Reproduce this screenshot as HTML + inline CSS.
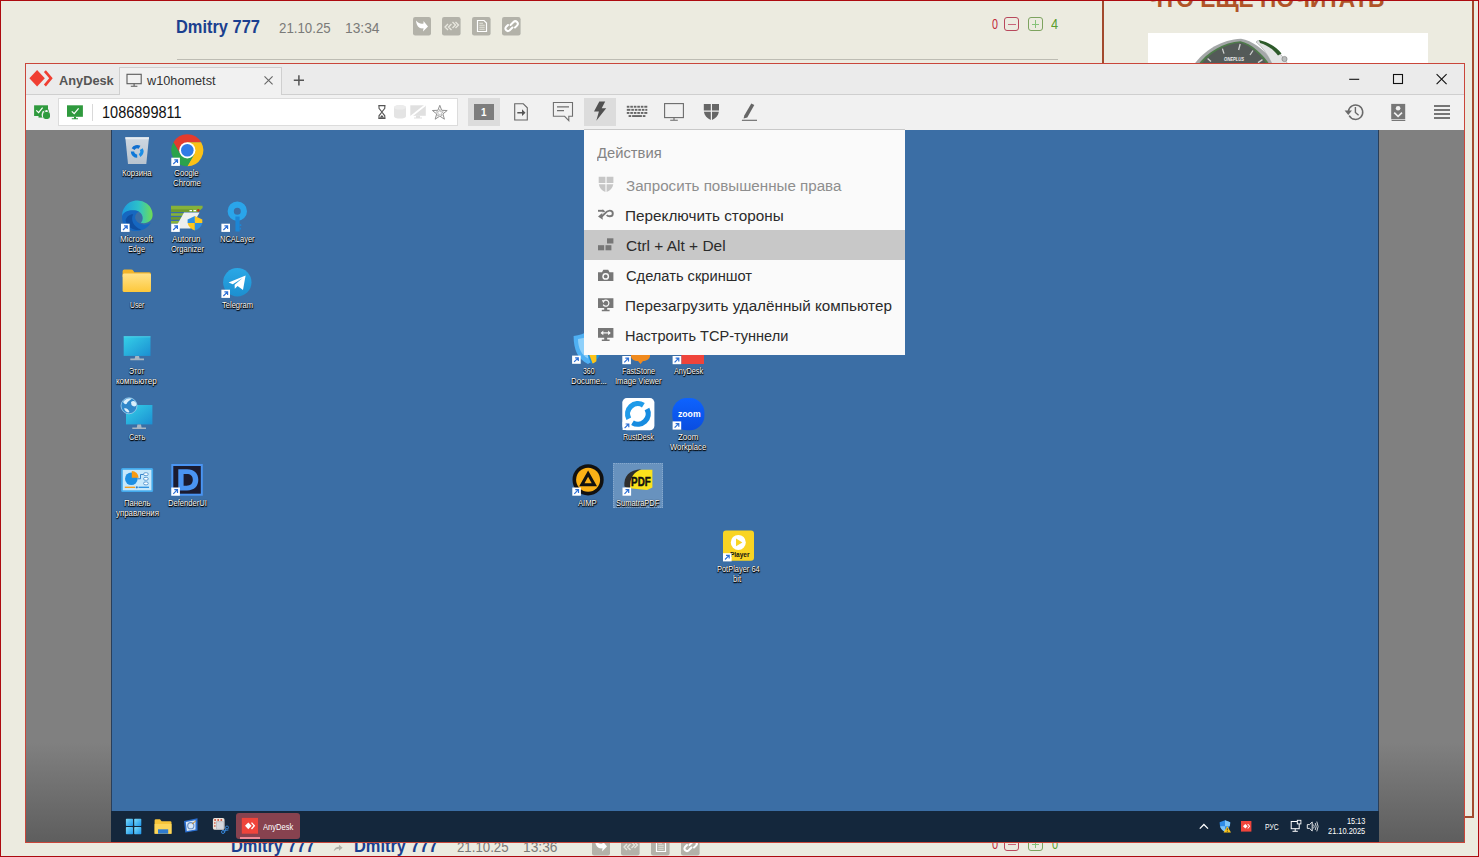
<!DOCTYPE html>
<html lang="ru"><head><meta charset="utf-8"><title>AnyDesk</title>
<style>
html,body{margin:0;padding:0}
body{width:1479px;height:857px;overflow:hidden;background:#ecebe0;font-family:"Liberation Sans",sans-serif;position:relative}
.abs,.tx,.layer{position:absolute}
.layer{left:0;top:0;width:1479px;height:857px;overflow:hidden}
.tx{white-space:nowrap;line-height:1;display:block;transform-origin:0 0}
.dl{text-shadow:0 0 1.5px #000,0.7px 0.7px 1.2px #000,0 0.6px 1px rgba(0,0,0,.9)}
svg{position:absolute;overflow:visible}
</style></head><body>
<!-- ===== forum page behind ===== -->
<div class="layer" id="page">
  <div class="abs" style="left:177px;top:59px;width:881px;height:1px;background:#bdbcb3"></div>
  <div class="abs" style="left:1102px;top:0;width:2px;height:70px;background:#a24a2e"></div>
  <div class="abs" style="left:1472px;top:0;width:2px;height:817.7px;background:#a24a2e"></div>
  <div class="abs" style="left:1102px;top:815.6px;width:372px;height:2.1px;background:#a24a2e"></div>
  <div class="abs" style="left:1148px;top:33px;width:280px;height:40px;background:#fff"></div>
<!-- forum action icons -->
<svg style="left:413px;top:17px" width="110" height="19" viewBox="0 0 110 19">
  <g id="fi">
  <g fill="#b3b2a9"><rect x="0" y="0" width="18" height="18.5" rx="2.2"/><rect x="29" y="0" width="18.6" height="18.5" rx="2.2"/><rect x="59" y="0" width="18.6" height="18.5" rx="2.2"/><rect x="89" y="0" width="18.6" height="18.5" rx="2.2"/></g>
  <path d="M3 3.5 C5.5 6.5 8 7.2 10.5 6.6 L10.5 4 L15 9.5 L10 14.5 L10.5 11.3 C6.5 12 3.5 9.5 3 3.5Z" fill="#fff"/>
  <path d="M35 7 L32 10 L35 13 M38.5 7 L35.5 10 L38.5 13 M39.5 5 L42.5 8 L39.5 11 M42.5 5 L45.5 8 L42.5 11" fill="none" stroke="#e9e8df" stroke-width="1.3"/>
  <path d="M64.5 3.5 H71 L73.5 6 V14.5 H64.5Z" fill="none" stroke="#fff" stroke-width="1.2"/>
  <path d="M66.3 6.3H70 M66.3 8.3H71.7 M66.3 10.3H71.7 M66.3 12.3H71.7" stroke="#e4e3da" stroke-width="1.1"/>
  <g fill="none" stroke="#fff" stroke-width="2" stroke-linecap="round"><path d="M97.5 8 L100.5 5 A2.5 2.5 0 0 1 104 8.6 L102 10.5"/><path d="M99.5 10.5 L96.5 13.5 A2.5 2.5 0 0 1 93 10 L95 8"/></g>
  </g>
</svg>
<svg style="left:592px;top:837.3px" width="110" height="19" viewBox="0 0 110 19"><use href="#fi"/></svg>
<!-- vote buttons -->
<div class="abs" style="left:1004px;top:17px;width:15px;height:14px;border:1px solid #b8485c;border-radius:3px;box-sizing:border-box"></div>
<div class="abs" style="left:1008px;top:23.5px;width:7.5px;height:1px;background:#c9657a"></div>
<div class="abs" style="left:1028px;top:17px;width:14.5px;height:14px;border:1px solid #7da35f;border-radius:3px;box-sizing:border-box"></div>
<div class="abs" style="left:1031.5px;top:23.5px;width:7.5px;height:1px;background:#86c27a"></div>
<div class="abs" style="left:1034.8px;top:20.2px;width:1px;height:7.5px;background:#86c27a"></div>
<div class="abs" style="left:1004px;top:837.3px;width:15px;height:14px;border:1px solid #b8485c;border-radius:3px;box-sizing:border-box"></div>
<div class="abs" style="left:1008px;top:843.9px;width:7.5px;height:1px;background:#c9657a"></div>
<div class="abs" style="left:1028px;top:837.3px;width:14.5px;height:14px;border:1px solid #7da35f;border-radius:3px;box-sizing:border-box"></div>
<div class="abs" style="left:1031.5px;top:843.9px;width:7.5px;height:1px;background:#86c27a"></div>
<div class="abs" style="left:1034.8px;top:840.6px;width:1px;height:7.5px;background:#86c27a"></div>
<!-- reply arrow in bottom row -->
<svg style="left:332.6px;top:843.6px" width="10.6" height="8" viewBox="0 0 16 12"><path d="M1 11 C2 6 5 4 9 4 V1 L14.5 5.5 L9 10 V7 C6 7 3.5 8 1 11Z" fill="#b3b2a9"/></svg>
<!-- watch in promo image -->
<svg style="left:0;top:0;overflow:hidden" width="1479" height="70" viewBox="0 0 1479 70">
  <path d="M1193 66 C1204 50 1222 39.5 1241 38.8 C1254 41 1267 52 1276 66Z" fill="#a4a7a8"/>
  <path d="M1197 66 C1207 52 1224 42.2 1240.5 41.3 C1251 43.5 1263 54 1270.5 66Z" fill="#4e7a4a"/>
  <path d="M1199.5 66 C1209 53.5 1225 43.6 1240.5 42.8 C1250 45 1261 55 1268 66Z" fill="#545a58"/>
  <path d="M1258 40.5 C1270 43.5 1281 52 1289 66 L1273 66 C1268.5 56 1263 47.5 1256 42Z" fill="#e2e4e4" stroke="#9a9d9e" stroke-width=".6"/>
  <path d="M1259 40 C1268 42 1276.5 47 1281.5 53.5 L1278 55.5 C1273 49 1266.5 45 1260 43Z" fill="#2d5a2a"/>
  <circle cx="1284.5" cy="59" r="2.6" fill="#b9bcbc" stroke="#777" stroke-width=".6"/>
  <path d="M1240.2 44 L1238.6 50 M1222.4 48.6 L1224 53.6 M1253 50.5 L1250 55 M1207.6 58.6 L1211 61.6 M1262.5 59.6 L1258 62.6" stroke="#cfd2d0" stroke-width="1.3"/>
  <text x="1224" y="60.6" font-size="4.6" font-family="Liberation Sans, sans-serif" font-weight="bold" font-style="italic" fill="#eee" textLength="20" lengthAdjust="spacingAndGlyphs">ONEPLUS</text>
</svg>

<span id="t0" class="tx" style="left:176.09px;top:18.00px;font-size:18px;color:#1b3f8f;font-weight:bold;transform:scaleX(0.9117);">Dmitry 777</span>
<span id="t1" class="tx" style="left:278.50px;top:20.00px;font-size:15.5px;color:#7a7a78;font-weight:normal;transform:scaleX(0.8557);">21.10.25</span>
<span id="t2" class="tx" style="left:345.11px;top:20.00px;font-size:15.5px;color:#7a7a78;font-weight:normal;transform:scaleX(0.8908);">13:34</span>
<span id="t3" class="tx" style="left:992.00px;top:17.00px;font-size:14px;color:#c0283a;font-weight:normal;transform:scaleX(0.7625);">0</span>
<span id="t4" class="tx" style="left:1050.90px;top:17.00px;font-size:14px;color:#5a9e2e;font-weight:normal;transform:scaleX(0.9125);">4</span>
<span id="t5" class="tx" style="left:1146.53px;top:-12.00px;font-size:23.5px;color:#b05428;font-weight:bold;transform:scaleX(0.9670);">ЧТО ЕЩЁ ПОЧИТАТЬ</span>
<span id="t6" class="tx" style="left:231.09px;top:837.00px;font-size:18px;color:#1b3f8f;font-weight:bold;transform:scaleX(0.9117);">Dmitry 777</span>
<span id="t7" class="tx" style="left:354.09px;top:837.00px;font-size:18px;color:#1b3f8f;font-weight:bold;transform:scaleX(0.9117);">Dmitry 777</span>
<span id="t8" class="tx" style="left:457.00px;top:839.00px;font-size:15.5px;color:#7a7a78;font-weight:normal;transform:scaleX(0.8541);">21.10.25</span>
<span id="t9" class="tx" style="left:523.11px;top:839.00px;font-size:15.5px;color:#7a7a78;font-weight:normal;transform:scaleX(0.8879);">13:36</span>
<span id="t10" class="tx" style="left:992.00px;top:837.00px;font-size:14px;color:#c0283a;font-weight:normal;transform:scaleX(0.7875);">0</span>
<span id="t11" class="tx" style="left:1051.70px;top:837.00px;font-size:14px;color:#5a9e2e;font-weight:normal;transform:scaleX(0.7875);">0</span>
</div>
<!-- ===== AnyDesk window ===== -->
<div class="layer" id="win">
  <div class="abs" style="left:25px;top:63px;width:1438px;height:778px;border:1px solid #c9463a;background:#f1f1f1"></div>
  <!-- title bar -->
  <div class="abs" style="left:26px;top:64px;width:1438px;height:30px;background:#ebebeb"></div>
  <div class="abs" style="left:26px;top:94px;width:1438px;height:1px;background:#cfcfcf"></div>
  <!-- tab -->
  <div class="abs" style="left:119px;top:67px;width:163px;height:28px;background:#f1f1f1;border:1px solid #cfcfcf;border-bottom:none;box-sizing:border-box"></div>
  <!-- toolbar -->
  <div class="abs" style="left:58px;top:98px;width:400px;height:28px;background:#fff;border:1px solid #dcdcdc;box-sizing:border-box"></div>
  <div class="abs" style="left:92px;top:104px;width:1px;height:17px;background:#d9d9d9"></div>
  <div class="abs" style="left:468px;top:98px;width:32px;height:28px;background:#dcdcdc"></div>
  <div class="abs" style="left:474px;top:104px;width:20px;height:16px;background:#7d7d7d"></div>
  <div class="abs" style="left:584px;top:98px;width:32px;height:28px;background:#dcdcdc"></div>
  <!-- remote view -->
  <div class="abs" style="left:26px;top:130px;width:1438px;height:712px;background:linear-gradient(to bottom,#808080 0,#808080 86%,#5e5e5e 100%)"></div>
  <div class="abs" style="left:111px;top:130px;width:1267.5px;height:681px;background:#3b6ea5;border-left:1px solid #2a3f5a;border-right:1px solid #2a3f5a;box-sizing:border-box"></div>
  <div class="abs" style="left:111px;top:810.5px;width:1267.5px;height:31.5px;background:#14273c"></div>
  <!-- selection -->
  <div class="abs" style="left:613px;top:463px;width:50px;height:45px;background:#6892be;border:1px dotted #86a8cd;box-sizing:border-box"></div>
  <!-- taskbar anydesk button -->
  <div class="abs" style="left:236px;top:813px;width:64px;height:26px;background:#87424f;border-radius:3px"></div>
  <div class="abs" style="left:240px;top:837px;width:20px;height:2px;background:#f08a96"></div>
<!-- ===== window chrome icons ===== -->
<svg style="left:0;top:0" width="1479" height="135" viewBox="0 0 1479 135">
  <!-- AnyDesk logo -->
  <path d="M29.4 78.3 L37.1 70 L44.8 78.3 L37.1 86.6Z" fill="#f03e32"/>
  <path d="M45.9 70.2 L52.7 78.3 L45.9 86.4 L43.9 84.6 L49.2 78.3 L43.9 72Z" fill="#f03e32"/>
  <!-- tab monitor icon -->
  <rect x="127" y="74.3" width="14.2" height="9.4" fill="none" stroke="#5a5a5a" stroke-width="1.1"/>
  <path d="M134.1 83.7 V86 M130.8 86.2 H137.4" stroke="#5a5a5a" stroke-width="1.1" fill="none"/>
  <!-- tab close, plus -->
  <path d="M264.5 76.3 L272.6 84.4 M272.6 76.3 L264.5 84.4" stroke="#666" stroke-width="1.1"/>
  <path d="M293.8 80.3 H304 M298.9 75.2 V85.4" stroke="#555" stroke-width="1.5"/>
  <!-- window controls -->
  <path d="M1349.2 79.3 H1359.2" stroke="#111" stroke-width="1.1"/>
  <rect x="1393.5" y="74.5" width="9" height="9" fill="none" stroke="#111" stroke-width="1.1"/>
  <path d="M1436.6 74.2 L1446.6 84.2 M1446.6 74.2 L1436.6 84.2" stroke="#111" stroke-width="1.1"/>
  <!-- left status icon: green monitor + lock -->
  <rect x="34.1" y="105.3" width="13.9" height="10.7" fill="#2f9a3e"/>
  <path d="M38.5 116 H43 V117.6 H38.5Z" fill="#2f9a3e"/>
  <path d="M36.3 110.3 L38.6 112.6 L42.6 107.6" stroke="#fff" stroke-width="1.2" fill="none"/>
  <circle cx="46.5" cy="114.8" r="4.9" fill="#f1f1f1"/>
  <rect x="43" y="112" width="7" height="7" rx="2.4" fill="#2f9a3e"/>
  <path d="M44.7 112.3 V111 A1.8 1.8 0 0 1 48.3 111 V112.3" stroke="#2f9a3e" stroke-width="1.1" fill="none"/>
  <!-- address box green monitor -->
  <rect x="67" y="105.3" width="15.9" height="11.5" fill="#2f9a3e"/>
  <path d="M74 116.8 H76 V118.3 H78 V119.2 H71.8 V118.3 H74Z" fill="#2f9a3e"/>
  <path d="M71.8 111.3 L74.2 113.7 L78.6 108.4" stroke="#fff" stroke-width="1.2" fill="none"/>
  <!-- hourglass -->
  <path d="M378.3 105.7 H385.5 M378.3 118.4 H385.5" stroke="#555" stroke-width="1.3"/>
  <path d="M379 106 V108.3 L381.9 112 L379 115.8 V118 M384.8 106 V108.3 L381.9 112 L384.8 115.8 V118" stroke="#555" stroke-width="1.1" fill="none"/>
  <path d="M379.6 117.8 L381.9 115 L384.2 117.8Z" fill="#555"/>
  <!-- cylinder (disabled) -->
  <path d="M394 107.3 A6 2.3 0 0 1 406 107.3 V116.3 A6 2.3 0 0 1 394 116.3Z" fill="#e4e4e4"/>
  <ellipse cx="400" cy="107.3" rx="6" ry="2.3" fill="#ececec"/>
  <!-- monitor slashed (disabled) -->
  <rect x="410.3" y="105.3" width="15.5" height="10.5" fill="#e0e0e0"/>
  <path d="M416 115.8 H420 V117.6 H422 V118.5 H414 V117.6 H416Z" fill="#e0e0e0"/>
  <path d="M411 116.5 L425.5 105" stroke="#fff" stroke-width="1.6"/>
  <!-- star -->
  <path d="M439.8 105.3 L441.7 110.3 L447.2 110.5 L442.9 113.9 L444.4 119.2 L439.8 116.1 L435.2 119.2 L436.7 113.9 L432.4 110.5 L437.9 110.3Z" fill="none" stroke="#909090" stroke-width="1"/>
  <path d="M439.8 109.3 L440.7 111.8 L443.3 111.9 L441.3 113.5 L442 116 L439.8 114.5 L437.6 116 L438.3 113.5 L436.3 111.9 L438.9 111.8Z" fill="none" stroke="#aaa" stroke-width=".8"/>
  <!-- file transfer icon -->
  <path d="M514.7 103.8 H523.3 L527.3 107.8 V120 H514.7Z" fill="none" stroke="#666" stroke-width="1.1"/>
  <path d="M517.3 112 H522 V109.3 L525.5 112.7 L522 116.1 V113.4 H517.3Z" fill="#555"/>
  <!-- chat icon -->
  <path d="M553.4 102.5 H572.5 V116.3 H568.8 V120.6 L564.6 116.3 H553.4Z" fill="none" stroke="#6f6f6f" stroke-width="1.1"/>
  <path d="M557 106.8 H569 M557 110.6 H564" stroke="#6f6f6f" stroke-width="1.3"/>
  <!-- bolt -->
  <path d="M599.3 101.6 H605.2 L601.7 108.3 H606.2 L596.3 120.7 L598.9 111.4 H594 Z" fill="#505050"/>
  <!-- keyboard -->
  <g fill="#666">
    <rect x="626.8" y="105.8" width="2.6" height="1.9"/><rect x="630.3" y="105.8" width="2.6" height="1.9"/><rect x="633.8" y="105.8" width="2.6" height="1.9"/><rect x="637.3" y="105.8" width="2.6" height="1.9"/><rect x="640.8" y="105.8" width="2.6" height="1.9"/><rect x="644.3" y="105.8" width="3" height="1.9"/>
    <rect x="626.8" y="108.9" width="3.6" height="1.9"/><rect x="631.3" y="108.9" width="2.6" height="1.9"/><rect x="634.8" y="108.9" width="2.6" height="1.9"/><rect x="638.3" y="108.9" width="2.6" height="1.9"/><rect x="641.8" y="108.9" width="2.6" height="1.9"/><rect x="645.3" y="108.9" width="2" height="1.9"/>
    <rect x="626.8" y="112" width="2.6" height="1.9"/><rect x="630.3" y="112" width="2.6" height="1.9"/><rect x="633.8" y="112" width="2.6" height="1.9"/><rect x="637.3" y="112" width="2.6" height="1.9"/><rect x="640.8" y="112" width="2.6" height="1.9"/><rect x="644.3" y="112" width="3" height="1.9"/>
    <rect x="628.6" y="115.1" width="2.6" height="1.9"/><rect x="632.1" y="115.1" width="9.8" height="1.9"/><rect x="642.8" y="115.1" width="2.6" height="1.9"/>
  </g>
  <!-- monitor -->
  <rect x="664.6" y="103.6" width="18.8" height="14" fill="none" stroke="#6a6a6a" stroke-width="1.1"/>
  <path d="M674 117.6 V120.2 M670.2 120.3 H677.8" stroke="#6a6a6a" stroke-width="1.1"/>
  <!-- shield -->
  <path d="M703.8 104 H710.8 V110.6 H703.8Z M712 104 H719 V110.6 H712Z M703.9 111.8 H710.8 V119.9 C707 118.3 704.5 115.6 703.9 111.8Z M712 111.8 H718.9 C718.3 115.6 715.8 118.3 712 119.9Z" fill="#666"/>
  <!-- pen -->
  <path d="M751.3 103.6 L754.3 104.9 L747.3 117.4 L743.6 118.6 L744.3 115.4Z" fill="#666"/>
  <path d="M741.9 120.3 H757" stroke="#666" stroke-width="1.1"/>
  <!-- history -->
  <path d="M1349.2 115.6 A7.2 7.2 0 1 0 1348.4 111.2" fill="none" stroke="#6a6a6a" stroke-width="1.5"/>
  <path d="M1344.6 110.6 H1352 L1348.3 114.9Z" fill="#6a6a6a"/>
  <path d="M1355.4 107 V112.5 L1358.6 115.3" fill="none" stroke="#6a6a6a" stroke-width="1.4"/>
  <!-- address book -->
  <rect x="1391.2" y="103.9" width="14" height="15.4" fill="#777"/>
  <path d="M1391.6 120.5 H1405.3" stroke="#777" stroke-width="1"/>
  <circle cx="1398.1" cy="108.3" r="2.3" fill="#f1f1f1"/>
  <path d="M1394.2 112.6 L1398.1 116.3 L1402 112.6" stroke="#f1f1f1" stroke-width="1.6" fill="none"/>
  <!-- hamburger -->
  <path d="M1434 106 H1450 M1434 110 H1450 M1434 114 H1450 M1434 118 H1450" stroke="#757575" stroke-width="1.9"/>
</svg>
<!-- ===== remote desktop icons ===== -->
<svg style="left:0;top:0" width="1479" height="857" viewBox="0 0 1479 857">
<defs>
  <g id="sc"><rect x="0" y="0" width="8.6" height="8.2" fill="#fff"/><path d="M2 6.3 L5.6 2.7 M3 2.2 H6.2 V5.4" stroke="#2b6fd6" stroke-width="1.2" fill="none"/></g>
  <linearGradient id="gbin" x1="0" y1="0" x2="0" y2="1"><stop offset="0" stop-color="#d3dbe3"/><stop offset="1" stop-color="#bcc6d0"/></linearGradient>
  <linearGradient id="gmon" x1="0" y1="0" x2="1" y2="1"><stop offset="0" stop-color="#35d0e8"/><stop offset="1" stop-color="#1b8fd2"/></linearGradient>
  <linearGradient id="gfold" x1="0" y1="0" x2="0" y2="1"><stop offset="0" stop-color="#ffe28a"/><stop offset="1" stop-color="#fdc83b"/></linearGradient>
  <linearGradient id="gedge" x1="0" y1="0" x2="1" y2="0"><stop offset="0" stop-color="#1c9ae0"/><stop offset=".55" stop-color="#2dc2c8"/><stop offset="1" stop-color="#6fdc54"/></linearGradient>
  <linearGradient id="gtg" x1="0" y1="0" x2="0" y2="1"><stop offset="0" stop-color="#2aa8e6"/><stop offset="1" stop-color="#1c8fd0"/></linearGradient>
  <linearGradient id="gzoom" x1="0" y1="0" x2="0" y2="1"><stop offset="0" stop-color="#0d63ff"/><stop offset="1" stop-color="#0a4de0"/></linearGradient>
  <linearGradient id="gwin" x1="0" y1="0" x2="1" y2="1"><stop offset="0" stop-color="#7bdcfb"/><stop offset="1" stop-color="#1e95ea"/></linearGradient>
</defs>
<!-- Recycle bin -->
<path d="M125.3 137.2 H149 L146.3 164 H128Z" fill="url(#gbin)" opacity=".97"/>
<path d="M125.3 137.2 H149 L148.8 139.2 H125.5Z" fill="#e6ecf1"/>
<g fill="none" stroke-width="3.4"><path d="M133.13 149.05 A4.7 4.7 0 0 1 139.55 147.33" stroke="#0f6fd0"/><path d="M141.27 149.05 A4.7 4.7 0 0 1 139.55 155.47" stroke="#1b8ee6"/><path d="M137.20 156.10 A4.7 4.7 0 0 1 132.50 151.40" stroke="#0f78d8"/></g>
<!-- Chrome -->
<path d="M173.44 142.30 A16 16 0 0 1 201.16 142.30 L187.30 142.30 L187.30 150.30 L180.37 154.30 Z" fill="#e33b2e"/>
<path d="M201.16 142.30 A16 16 0 0 1 187.30 166.30 L194.23 154.30 L187.30 150.30 L187.30 142.30 Z" fill="#fbc116"/>
<path d="M187.30 166.30 A16 16 0 0 1 173.44 142.30 L180.37 154.30 L187.30 150.30 L194.23 154.30 Z" fill="#2ba24c"/>
<circle cx="187.3" cy="150.3" r="8.1" fill="#fff"/>
<circle cx="187.3" cy="150.3" r="6.3" fill="#2f7be6"/>
<use href="#sc" x="171.3" y="157.7"/>
<!-- Edge -->
<g transform="translate(137.4 215.6) scale(.955) translate(-137.4 -214.9)">
<path d="M121.5 217 A16 16 0 0 1 153.3 213 C154 221 147 224 141 222.5 C146 217 141 209 134 209.5 C127 210 122.5 213 121.5 217Z" fill="url(#gedge)"/>
<path d="M121.3 216 C121 226 129 232 138 231 C144 230.5 149 227 151.5 222.5 C146 226 138 224.5 135.5 219 C134 215 136.5 211.5 139 210.5 C131 207.5 122 210 121.3 216Z" fill="#1667c0"/>
<path d="M133 213.5 C130 219 133 227 141.5 229.5 C136 231.5 127 228 125 220 C126 216 129 213.5 133 213.5Z" fill="#0f4fa2"/>
</g>
<use href="#sc" x="121" y="223.7"/>
<!-- Autorun Organizer -->
<path d="M171 205.8 H202.6 V208 L198 212 H171Z" fill="#86b23a"/>
<rect x="171" y="209.3" width="22" height="2.6" fill="#6d9a2f"/><rect x="171" y="213.2" width="18" height="2.6" fill="#86b23a"/><rect x="171" y="217.1" width="14" height="2.6" fill="#6d9a2f"/><rect x="171" y="221" width="10" height="2.6" fill="#86b23a"/>
<path d="M184 212.5 H199.5 L190.5 228.5 H175Z" fill="#eef0ee"/>
<path d="M189.5 210.6 H192 M193.5 210.6 H196" stroke="#fff" stroke-width="1.4"/><circle cx="198.3" cy="210.4" r="1.3" fill="#b63b1e"/>
<path d="M187.6 219.5 L194.9 215.9 V223 H187.6Z" fill="#2d8fe0"/><path d="M194.9 215.9 L202.3 219.5 V223 H194.9Z" fill="#fdc81d"/>
<path d="M187.6 223 H194.9 V230.5 C191 229 188.3 226.5 187.6 223Z" fill="#fdc81d"/><path d="M194.9 223 H202.3 C201.6 226.5 198.8 229 194.9 230.5Z" fill="#2d8fe0"/>
<use href="#sc" x="171.2" y="223.7"/>
<!-- NCALayer key -->
<circle cx="237.3" cy="211.2" r="6.6" fill="none" stroke="#2aa5ea" stroke-width="6.2"/>
<path d="M235.4 216.5 H239.6 V231.5 H235.4Z" fill="#1c86d6"/><path d="M239.6 224.3 H241.3 V226 H239.6Z M239.6 227.8 H241 V229.5 H239.6Z" fill="#1c86d6"/>
<use href="#sc" x="221.4" y="223.7"/>
<!-- User folder -->
<path d="M122.6 271.3 Q122.6 269.6 124.3 269.6 H131 Q132.6 269.6 133.5 271 L134.3 272.2 H149.3 Q151 272.2 151 273.9 V277 H122.6Z" fill="#f2b42a"/>
<rect x="122.6" y="273.4" width="28.4" height="18.6" rx="1.6" fill="url(#gfold)"/>
<!-- Telegram -->
<circle cx="237.3" cy="282.3" r="14.2" fill="url(#gtg)"/>
<path d="M228.6 282.6 L245.6 275.6 L243 290 L237.6 286 L234.8 288.8 L234.6 284.8 L242.6 278 L232.8 284.2Z" fill="#fff"/>
<use href="#sc" x="221.4" y="289.7"/>
<!-- This PC -->
<rect x="123.7" y="336.3" width="26.8" height="19.6" fill="url(#gmon)"/>
<rect x="123.7" y="336.3" width="26.8" height="1" fill="#5fe0f0" opacity=".6"/>
<path d="M135.3 355.9 H139 L139.6 358.6 H144 V360.2 H130.3 V358.6 H134.7Z" fill="#a9b6c2"/>
<!-- Network -->
<rect x="126" y="405" width="26.4" height="19.4" fill="url(#gmon)"/>
<path d="M137.4 424.4 H141 L141.6 427.4 H146 V429 H132.3 V427.4 H136.8Z" fill="#a9b6c2"/>
<circle cx="129" cy="405.8" r="8" fill="#2f86c9"/>
<path d="M123 402 C125 398.5 129 397.5 132 398.5 C130 400.5 127.5 401 126.5 404 C125 404.5 124 403.5 123 402Z M131 402 C133.5 400 136 401.5 136.8 404.5 C135.5 407.5 133 406.5 131.5 405Z M124 408.5 C126 407.5 128.5 409 129.5 412 C127.5 413.2 125 411.5 124 408.5Z" fill="#d9eefb"/>
<circle cx="129" cy="405.8" r="8" fill="none" stroke="#9fd0ee" stroke-width=".8"/>
<!-- Control panel -->
<rect x="121.1" y="468.1" width="32" height="23.9" rx="1.5" fill="#43a9ec"/>
<rect x="122.8" y="469.8" width="28.6" height="20.5" fill="#c7e8fb"/>
<circle cx="131.3" cy="478.8" r="6.3" fill="#1d8fe3"/>
<path d="M131.8 477.8 V471 A6.8 6.8 0 0 1 138.6 477.8Z" fill="#f89a12"/>
<path d="M137.5 478.8 H140.5 V474.5 H144" fill="none" stroke="#2b7bc4" stroke-width=".9"/>
<rect x="143.6" y="472.8" width="4.6" height="2.8" rx="1.4" fill="#fff" stroke="#2b7bc4" stroke-width=".7"/><rect x="143.6" y="477.4" width="4.6" height="2.8" rx="1.4" fill="#fff" stroke="#2b7bc4" stroke-width=".7"/><rect x="143.6" y="482" width="4.6" height="2.8" rx="1.4" fill="#fff" stroke="#2b7bc4" stroke-width=".7"/>
<path d="M124.8 487.3 H135" stroke="#f89a12" stroke-width="1.3"/><path d="M138.5 487.3 H149" stroke="#2b8fe0" stroke-width="1.3"/><circle cx="136.8" cy="487.3" r="1.1" fill="#2b7bc4"/>
<!-- DefenderUI -->
<rect x="171.3" y="464" width="31.5" height="31.7" fill="#4a94f2"/>
<rect x="173.3" y="466" width="27.5" height="27.7" fill="#1b1b30"/>
<path d="M178.3 469.3 H187 C194.5 469.3 198.3 473.5 198.3 479.8 C198.3 486.2 194.5 490.4 187 490.4 H178.3Z M183.6 474 V485.7 H186.6 C190.6 485.7 192.8 483.6 192.8 479.8 C192.8 476 190.6 474 186.6 474Z" fill="#4a94f2" fill-rule="evenodd"/>
<use href="#sc" x="171.3" y="487.5"/>
<!-- 360 / FastStone / AnyDesk (mostly hidden by menu) -->
<path d="M573.6 336 C580 335.3 584 333.5 588 331 C592 333.5 596 335.3 602.4 336 C602.4 350 598 359 588 364 C578 359 573.6 350 573.6 336Z" fill="#4fb0f3"/>
<path d="M578 339 C582 338.5 585 337.5 588 336 V358.5 C581.5 355 578 348 578 339Z" fill="#8ed0fa"/>
<path d="M588 355 H600 C598 359 594.5 362 591 364 Z" fill="#1a90e0"/>
<path d="M589.4 355 H596.4 V361.3 C595 362.3 593.6 363.2 592.6 363.6Z" fill="#fcc419"/>
<use href="#sc" x="572.1" y="355.6"/>
<path d="M631 340 H650 V356 C650 359 646 361 643 361 L640.5 364 L638 361 C634 361 631 359 631 356Z" fill="#f08a1d"/>
<use href="#sc" x="622.3" y="356"/>
<rect x="681.3" y="334" width="22.7" height="30" fill="#ef443b"/>
<use href="#sc" x="672.6" y="356"/>
<!-- RustDesk -->
<rect x="622.3" y="398.1" width="32.1" height="32.1" rx="4.5" fill="#fff"/>
<path d="M628.81 418.74 A10.3 10.3 0 0 1 643.36 405.17" fill="none" stroke="#1f9be9" stroke-width="5.3"/>
<path d="M646.99 409.06 A10.3 10.3 0 0 1 632.44 422.63" fill="none" stroke="#178ce0" stroke-width="5.3"/>
<use href="#sc" x="622.6" y="421.8"/>
<!-- Zoom -->
<rect x="672.3" y="398" width="32.1" height="32.2" rx="14.5" fill="url(#gzoom)"/>
<use href="#sc" x="672.6" y="421.4"/>
<!-- AIMP -->
<circle cx="588.1" cy="479.8" r="15.6" fill="#111"/>
<circle cx="588.1" cy="479.8" r="12" fill="#fbb117"/>
<path d="M588.1 470.5 L597 486.2 H579.2Z M588.1 476.7 L584.5 483.2 H591.7Z" fill="#111" fill-rule="evenodd"/>
<use href="#sc" x="572.3" y="487.5"/>
<!-- SumatraPDF -->
<path d="M627 487.4 C626.4 477 631 470.6 641 469.8 L652.4 469.7 V487.6 L647 490 L632 488.4Z" fill="#fbe21c"/>
<path d="M624.4 486.6 C623.6 476 629 469.8 641.5 469.2 C633.5 472 629.6 478 630.2 488.2 L626.6 487.4Z" fill="#2e2e2e"/>
<text x="631.1" y="485.6" font-family="Liberation Sans, sans-serif" font-weight="bold" font-size="13.4" fill="#111" stroke="#111" stroke-width=".5" textLength="19.6" lengthAdjust="spacingAndGlyphs">PDF</text>
<use href="#sc" x="622.5" y="487.5"/>
<!-- PotPlayer -->
<rect x="723" y="530.5" width="31" height="30.3" rx="3" fill="#f9d423"/>
<circle cx="738.3" cy="542.4" r="7.5" fill="#fff"/>
<path d="M736 538.6 L742.4 542.4 L736 546.2Z" fill="#f9d423"/>
<text x="729.9" y="557" font-family="Liberation Sans, sans-serif" font-weight="bold" font-size="7" fill="#111" textLength="19.6" lengthAdjust="spacingAndGlyphs">Player</text>
<use href="#sc" x="723" y="553.2"/>
<!-- ===== taskbar ===== -->
<g fill="url(#gwin)"><rect x="125.9" y="818.8" width="7.1" height="7.1" rx=".6"/><rect x="134.2" y="818.8" width="7.1" height="7.1" rx=".6"/><rect x="125.9" y="827.1" width="7.1" height="7.1" rx=".6"/><rect x="134.2" y="827.1" width="7.1" height="7.1" rx=".6"/></g>
<path d="M154.6 820.6 Q154.6 819.3 155.9 819.3 H160 L161.6 821.2 H170.3 Q171.5 821.2 171.5 822.4 V833.7 H154.6Z" fill="#f7c53a"/>
<path d="M154.6 824 H171.5 V833.7 H154.6Z" fill="#fdd65a"/>
<path d="M158 829.3 H168.2 V833.7 H158Z" fill="#2f7bcf"/>
<path d="M184 821 L197.5 818.3 V830.5 L185.3 832.6Z" fill="#2b6fd0"/>
<path d="M185.8 822 L195.5 820.2 V829.5 L186.8 831Z" fill="#dbe9f8"/>
<circle cx="190.8" cy="825.7" r="3.1" fill="none" stroke="#6a8fc4" stroke-width="1.1"/><path d="M192 824 L195.8 821" stroke="#c88a2a" stroke-width="1"/>
<rect x="212.9" y="818.1" width="11.6" height="11.6" rx="1.6" fill="#e9e4dc"/>
<rect x="216.5" y="821.8" width="7.4" height="7.4" fill="#d4d8de" stroke="#a8adb6" stroke-width=".6"/>
<path d="M214.3 820 H215.9 M217.4 820 H219 M220.5 820 H222.1 M214.3 823 H215.4 M214.3 826 H215.4" stroke="#c8351e" stroke-width="1.3"/>
<circle cx="223" cy="832" r="1.5" fill="none" stroke="#3a8be0" stroke-width=".9"/><circle cx="227" cy="827.5" r="1.5" fill="none" stroke="#3a8be0" stroke-width=".9"/><path d="M224 830.8 L228.5 830 M225.8 828.5 L224.5 833" stroke="#3a8be0" stroke-width=".8"/>
<rect x="241.8" y="817.9" width="16.2" height="15.8" fill="#ef443b"/>
<path d="M245 825.8 L248.3 822.4 L251.6 825.8 L248.3 829.2Z" fill="#fff"/><path d="M251 823 L252 822.2 L255.2 825.8 L252 829.4 L251 828.6 L253.4 825.8Z" fill="#fff"/>
<!-- systray -->
<path d="M1199.8 828.6 L1203.9 824.5 L1208 828.6" fill="none" stroke="#fff" stroke-width="1.3"/>
<path d="M1219.6 822.3 L1225 820.3 L1230.2 822.3 C1230.2 827 1228.5 830 1225 832 C1221.4 830 1219.6 827 1219.6 822.3Z" fill="#2e8be6"/>
<path d="M1225 820.3 L1230.2 822.3 C1230.2 824 1230 825.2 1229.6 826.3 H1225Z" fill="#7cc4f8"/><path d="M1220 826.3 H1225 V832 C1222.4 830.6 1220.7 828.8 1220 826.3Z" fill="#7cc4f8"/>
<path d="M1227.3 826.3 L1231 832.6 H1223.6Z" fill="#fcc419"/><path d="M1227.3 828.3 V830.4 M1227.3 831 V831.8" stroke="#222" stroke-width=".8"/>
<rect x="1241" y="821" width="10.4" height="10.6" fill="#ef443b"/>
<path d="M1243 826.3 L1245.3 824 L1247.6 826.3 L1245.3 828.6Z" fill="#fff"/><path d="M1247.3 824.3 L1248 823.8 L1250.2 826.3 L1248 828.8 L1247.3 828.3 L1249 826.3Z" fill="#fff"/>
<rect x="1291.2" y="821.5" width="8" height="7.2" fill="none" stroke="#fff" stroke-width="1"/><path d="M1295.2 828.7 V831 M1292.5 831.3 H1297.8" stroke="#fff" stroke-width="1"/>
<rect x="1297.3" y="820.3" width="3.6" height="3.6" fill="#14273c" stroke="#fff" stroke-width=".9"/>
<path d="M1307.3 824.6 H1309.5 L1312.2 822 V831 L1309.5 828.4 H1307.3Z" fill="none" stroke="#fff" stroke-width=".9"/>
<path d="M1313.6 824.6 Q1314.8 826.5 1313.6 828.4 M1315.2 823 Q1317.2 826.5 1315.2 830 M1316.8 821.6 Q1319.4 826.5 1316.8 831.4" fill="none" stroke="#fff" stroke-width=".8"/>
</svg>

<span id="t12" class="tx" style="left:58.50px;top:74.00px;font-size:13.5px;color:#555;font-weight:bold;transform:scaleX(0.9473);">AnyDesk</span>
<span id="t13" class="tx" style="left:146.94px;top:74.00px;font-size:13.5px;color:#333;font-weight:normal;transform:scaleX(0.9414);">w10hometst</span>
<span id="t14" class="tx" style="left:102.27px;top:105.00px;font-size:15.6px;color:#111;font-weight:normal;transform:scaleX(0.9309);">1086899811</span>
<span id="t15" class="tx" style="left:481.00px;top:107.00px;font-size:11.5px;color:#fff;font-weight:bold;transform:scaleX(0.8571);">1</span>
<span id="t16" class="tx" style="left:121.90px;top:170.00px;font-size:8.2px;color:#fff;font-weight:normal;transform:scaleX(0.9515);text-shadow:0 0 1px #000,.6px .6px 1px #000,0 .6px 1.2px #000;">Корзина</span>
<span id="t17" class="tx" style="left:174.00px;top:170.00px;font-size:8.2px;color:#fff;font-weight:normal;transform:scaleX(0.9312);text-shadow:0 0 1px #000,.6px .6px 1px #000,0 .6px 1.2px #000;">Google</span>
<span id="t18" class="tx" style="left:172.90px;top:180.00px;font-size:8.2px;color:#fff;font-weight:normal;transform:scaleX(0.9572);text-shadow:0 0 1px #000,.6px .6px 1px #000,0 .6px 1.2px #000;">Chrome</span>
<span id="t19" class="tx" style="left:120.10px;top:236.00px;font-size:8.2px;color:#fff;font-weight:normal;transform:scaleX(0.9872);text-shadow:0 0 1px #000,.6px .6px 1px #000,0 .6px 1.2px #000;">Microsoft</span>
<span id="t20" class="tx" style="left:128.00px;top:246.00px;font-size:8.2px;color:#fff;font-weight:normal;transform:scaleX(0.8841);text-shadow:0 0 1px #000,.6px .6px 1px #000,0 .6px 1.2px #000;">Edge</span>
<span id="t21" class="tx" style="left:172.30px;top:236.00px;font-size:8.2px;color:#fff;font-weight:normal;transform:scaleX(0.9924);text-shadow:0 0 1px #000,.6px .6px 1px #000,0 .6px 1.2px #000;">Autorun</span>
<span id="t22" class="tx" style="left:170.60px;top:246.00px;font-size:8.2px;color:#fff;font-weight:normal;transform:scaleX(0.9166);text-shadow:0 0 1px #000,.6px .6px 1px #000,0 .6px 1.2px #000;">Organizer</span>
<span id="t23" class="tx" style="left:219.70px;top:236.00px;font-size:8.2px;color:#fff;font-weight:normal;transform:scaleX(0.9148);text-shadow:0 0 1px #000,.6px .6px 1px #000,0 .6px 1.2px #000;">NCALayer</span>
<span id="t24" class="tx" style="left:129.70px;top:302.00px;font-size:8.2px;color:#fff;font-weight:normal;transform:scaleX(0.8314);text-shadow:0 0 1px #000,.6px .6px 1px #000,0 .6px 1.2px #000;">User</span>
<span id="t25" class="tx" style="left:222.00px;top:302.00px;font-size:8.2px;color:#fff;font-weight:normal;transform:scaleX(0.9217);text-shadow:0 0 1px #000,.6px .6px 1px #000,0 .6px 1.2px #000;">Telegram</span>
<span id="t26" class="tx" style="left:128.70px;top:368.00px;font-size:8.2px;color:#fff;font-weight:normal;transform:scaleX(0.8540);text-shadow:0 0 1px #000,.6px .6px 1px #000,0 .6px 1.2px #000;">Этот</span>
<span id="t27" class="tx" style="left:116.00px;top:378.00px;font-size:8.2px;color:#fff;font-weight:normal;transform:scaleX(0.9850);text-shadow:0 0 1px #000,.6px .6px 1px #000,0 .6px 1.2px #000;">компьютер</span>
<span id="t28" class="tx" style="left:128.70px;top:434.00px;font-size:8.2px;color:#fff;font-weight:normal;transform:scaleX(0.8917);text-shadow:0 0 1px #000,.6px .6px 1px #000,0 .6px 1.2px #000;">Сеть</span>
<span id="t29" class="tx" style="left:124.00px;top:500.00px;font-size:8.2px;color:#fff;font-weight:normal;transform:scaleX(0.9387);text-shadow:0 0 1px #000,.6px .6px 1px #000,0 .6px 1.2px #000;">Панель</span>
<span id="t30" class="tx" style="left:115.50px;top:510.00px;font-size:8.2px;color:#fff;font-weight:normal;transform:scaleX(0.9633);text-shadow:0 0 1px #000,.6px .6px 1px #000,0 .6px 1.2px #000;">управления</span>
<span id="t31" class="tx" style="left:167.80px;top:500.00px;font-size:8.2px;color:#fff;font-weight:normal;transform:scaleX(0.9256);text-shadow:0 0 1px #000,.6px .6px 1px #000,0 .6px 1.2px #000;">DefenderUI</span>
<span id="t32" class="tx" style="left:582.50px;top:368.00px;font-size:8.2px;color:#fff;font-weight:normal;transform:scaleX(0.8436);text-shadow:0 0 1px #000,.6px .6px 1px #000,0 .6px 1.2px #000;">360</span>
<span id="t33" class="tx" style="left:570.50px;top:378.00px;font-size:8.2px;color:#fff;font-weight:normal;transform:scaleX(0.9585);text-shadow:0 0 1px #000,.6px .6px 1px #000,0 .6px 1.2px #000;">Docume...</span>
<span id="t34" class="tx" style="left:621.60px;top:368.00px;font-size:8.2px;color:#fff;font-weight:normal;transform:scaleX(0.8844);text-shadow:0 0 1px #000,.6px .6px 1px #000,0 .6px 1.2px #000;">FastStone</span>
<span id="t35" class="tx" style="left:614.60px;top:378.00px;font-size:8.2px;color:#fff;font-weight:normal;transform:scaleX(0.9326);text-shadow:0 0 1px #000,.6px .6px 1px #000,0 .6px 1.2px #000;">Image Viewer</span>
<span id="t36" class="tx" style="left:673.60px;top:368.00px;font-size:8.2px;color:#fff;font-weight:normal;transform:scaleX(0.8881);text-shadow:0 0 1px #000,.6px .6px 1px #000,0 .6px 1.2px #000;">AnyDesk</span>
<span id="t37" class="tx" style="left:622.90px;top:434.00px;font-size:8.2px;color:#fff;font-weight:normal;transform:scaleX(0.8655);text-shadow:0 0 1px #000,.6px .6px 1px #000,0 .6px 1.2px #000;">RustDesk</span>
<span id="t38" class="tx" style="left:678.10px;top:434.00px;font-size:8.2px;color:#fff;font-weight:normal;transform:scaleX(0.9712);text-shadow:0 0 1px #000,.6px .6px 1px #000,0 .6px 1.2px #000;">Zoom</span>
<span id="t39" class="tx" style="left:670.40px;top:444.00px;font-size:8.2px;color:#fff;font-weight:normal;transform:scaleX(0.9391);text-shadow:0 0 1px #000,.6px .6px 1px #000,0 .6px 1.2px #000;">Workplace</span>
<span id="t40" class="tx" style="left:578.00px;top:500.00px;font-size:8.2px;color:#fff;font-weight:normal;transform:scaleX(0.9340);text-shadow:0 0 1px #000,.6px .6px 1px #000,0 .6px 1.2px #000;">AIMP</span>
<span id="t41" class="tx" style="left:616.30px;top:500.00px;font-size:8.2px;color:#fff;font-weight:normal;transform:scaleX(0.9151);text-shadow:0 0 1px #000,.6px .6px 1px #000,0 .6px 1.2px #000;">SumatraPDF</span>
<span id="t42" class="tx" style="left:716.50px;top:566.00px;font-size:8.2px;color:#fff;font-weight:normal;transform:scaleX(0.9107);text-shadow:0 0 1px #000,.6px .6px 1px #000,0 .6px 1.2px #000;">PotPlayer 64</span>
<span id="t43" class="tx" style="left:733.40px;top:576.00px;font-size:8.2px;color:#fff;font-weight:normal;transform:scaleX(0.9282);text-shadow:0 0 1px #000,.6px .6px 1px #000,0 .6px 1.2px #000;">bit</span>
<span id="t44" class="tx" style="left:263.20px;top:823.00px;font-size:9px;color:#fff;font-weight:normal;transform:scaleX(0.8408);">AnyDesk</span>
<span id="t45" class="tx" style="left:1264.50px;top:823.00px;font-size:9px;color:#fff;font-weight:normal;transform:scaleX(0.7558);">РУС</span>
<span id="t46" class="tx" style="left:1347.00px;top:817.00px;font-size:9px;color:#fff;font-weight:normal;transform:scaleX(0.8083);">15:13</span>
<span id="t47" class="tx" style="left:1328.00px;top:827.00px;font-size:9px;color:#fff;font-weight:normal;transform:scaleX(0.8260);">21.10.2025</span>
<span id="t48" class="tx" style="left:677.50px;top:409.00px;font-size:9.5px;color:#fff;font-weight:bold;transform:scaleX(0.9115);">zoom</span>
</div>
<!-- ===== dropdown menu ===== -->
<div class="layer" id="menu">
  <div class="abs" style="left:584.4px;top:129px;width:320.5px;height:226.3px;background:#fafafa"></div>
  <div class="abs" style="left:584.4px;top:129px;width:320.5px;height:1px;background:#c9c9c9"></div>
  <div class="abs" style="left:584.4px;top:230.4px;width:320.5px;height:29.4px;background:#c8c8c8"></div>
<svg style="left:0;top:0" width="1479" height="400" viewBox="0 0 1479 400">
  <!-- shield (disabled) -->
  <path d="M598.7 176.7 H605.4 V183 H598.7Z M606.6 176.7 H613.4 V183 H606.6Z M598.8 184.2 H605.4 V192 C601.8 190.5 599.4 188 598.8 184.2Z M606.6 184.2 H613.3 C612.7 188 610.3 190.5 606.6 192Z" fill="#c6c6c6"/>
  <!-- switch sides -->
  <g fill="none" stroke="#777" stroke-width="1.9"><path d="M601 216.4 C604.2 216.4 605 210.7 609.6 210.6 C611.8 210.6 612.8 212 612.8 213.4 C612.8 215 611.6 216.3 609.6 216.3 C608.3 216.3 607.3 215.8 606.8 215"/><path d="M598 210.8 H603.4"/></g>
  <path d="M598 216.5 L602.2 213 L602.8 219.8Z" fill="#777"/><path d="M602.6 209.3 L605.4 211.5 L602.6 212.6Z" fill="#777"/>
  <!-- ctrl alt del -->
  <g fill="#777"><rect x="598" y="245.2" width="6.2" height="5.1"/><rect x="605.5" y="245.2" width="5.9" height="5.1"/><rect x="607" y="238.3" width="6.4" height="5.2"/></g>
  <!-- camera -->
  <path d="M598 272.2 H602 L603.3 269.8 H608.2 L609.5 272.2 H613.4 V281 H598Z" fill="#777"/>
  <circle cx="605.7" cy="276.4" r="3.4" fill="#fafafa"/><circle cx="605.7" cy="276.4" r="1.9" fill="#777"/>
  <!-- restart remote -->
  <path d="M598 298.2 H613.4 V308 H607.2 V309.8 H609.6 V311.2 H601.8 V309.8 H604.2 V308 H598Z" fill="#777"/>
  <path d="M603.2 304.6 A3 3 0 1 0 603.6 301.2" fill="none" stroke="#fafafa" stroke-width="1.2"/><path d="M601.8 300 L604.8 300.4 L603.4 303.2Z" fill="#fafafa"/>
  <!-- tcp tunnel -->
  <path d="M598 328 H613.4 V337.8 H607.2 V339.6 H609.6 V341 H601.8 V339.6 H604.2 V337.8 H598Z" fill="#777"/>
  <path d="M601.6 332.9 H609.8" stroke="#fafafa" stroke-width="1.2"/><path d="M603.3 330.6 L600.6 332.9 L603.3 335.2Z M608.1 330.6 L610.8 332.9 L608.1 335.2Z" fill="#fafafa"/>
</svg>

<span id="t49" class="tx" style="left:597.00px;top:145.00px;font-size:15px;color:#848484;font-weight:normal;transform:scaleX(0.9833);">Действия</span>
<span id="t50" class="tx" style="left:625.60px;top:178.00px;font-size:15.2px;color:#8e8e8e;font-weight:normal;transform:scaleX(0.9970);">Запросить повышенные права</span>
<span id="t51" class="tx" style="left:624.59px;top:208.00px;font-size:15.2px;color:#2b2b2b;font-weight:normal;transform:scaleX(1.0072);">Переключить стороны</span>
<span id="t52" class="tx" style="left:625.60px;top:238.00px;font-size:15.2px;color:#2b2b2b;font-weight:normal;transform:scaleX(1.0175);">Ctrl + Alt + Del</span>
<span id="t53" class="tx" style="left:625.60px;top:268.00px;font-size:15.2px;color:#2b2b2b;font-weight:normal;transform:scaleX(0.9649);">Сделать скриншот</span>
<span id="t54" class="tx" style="left:624.60px;top:298.00px;font-size:15.2px;color:#2b2b2b;font-weight:normal;transform:scaleX(1.0034);">Перезагрузить удалённый компьютер</span>
<span id="t55" class="tx" style="left:624.64px;top:328.00px;font-size:15.2px;color:#2b2b2b;font-weight:normal;transform:scaleX(0.9571);">Настроить TCP-туннели</span>
</div>
<div class="abs" style="left:0;top:0;width:1477px;height:855px;border:1px solid #ad0a10;pointer-events:none"></div>
</body></html>
